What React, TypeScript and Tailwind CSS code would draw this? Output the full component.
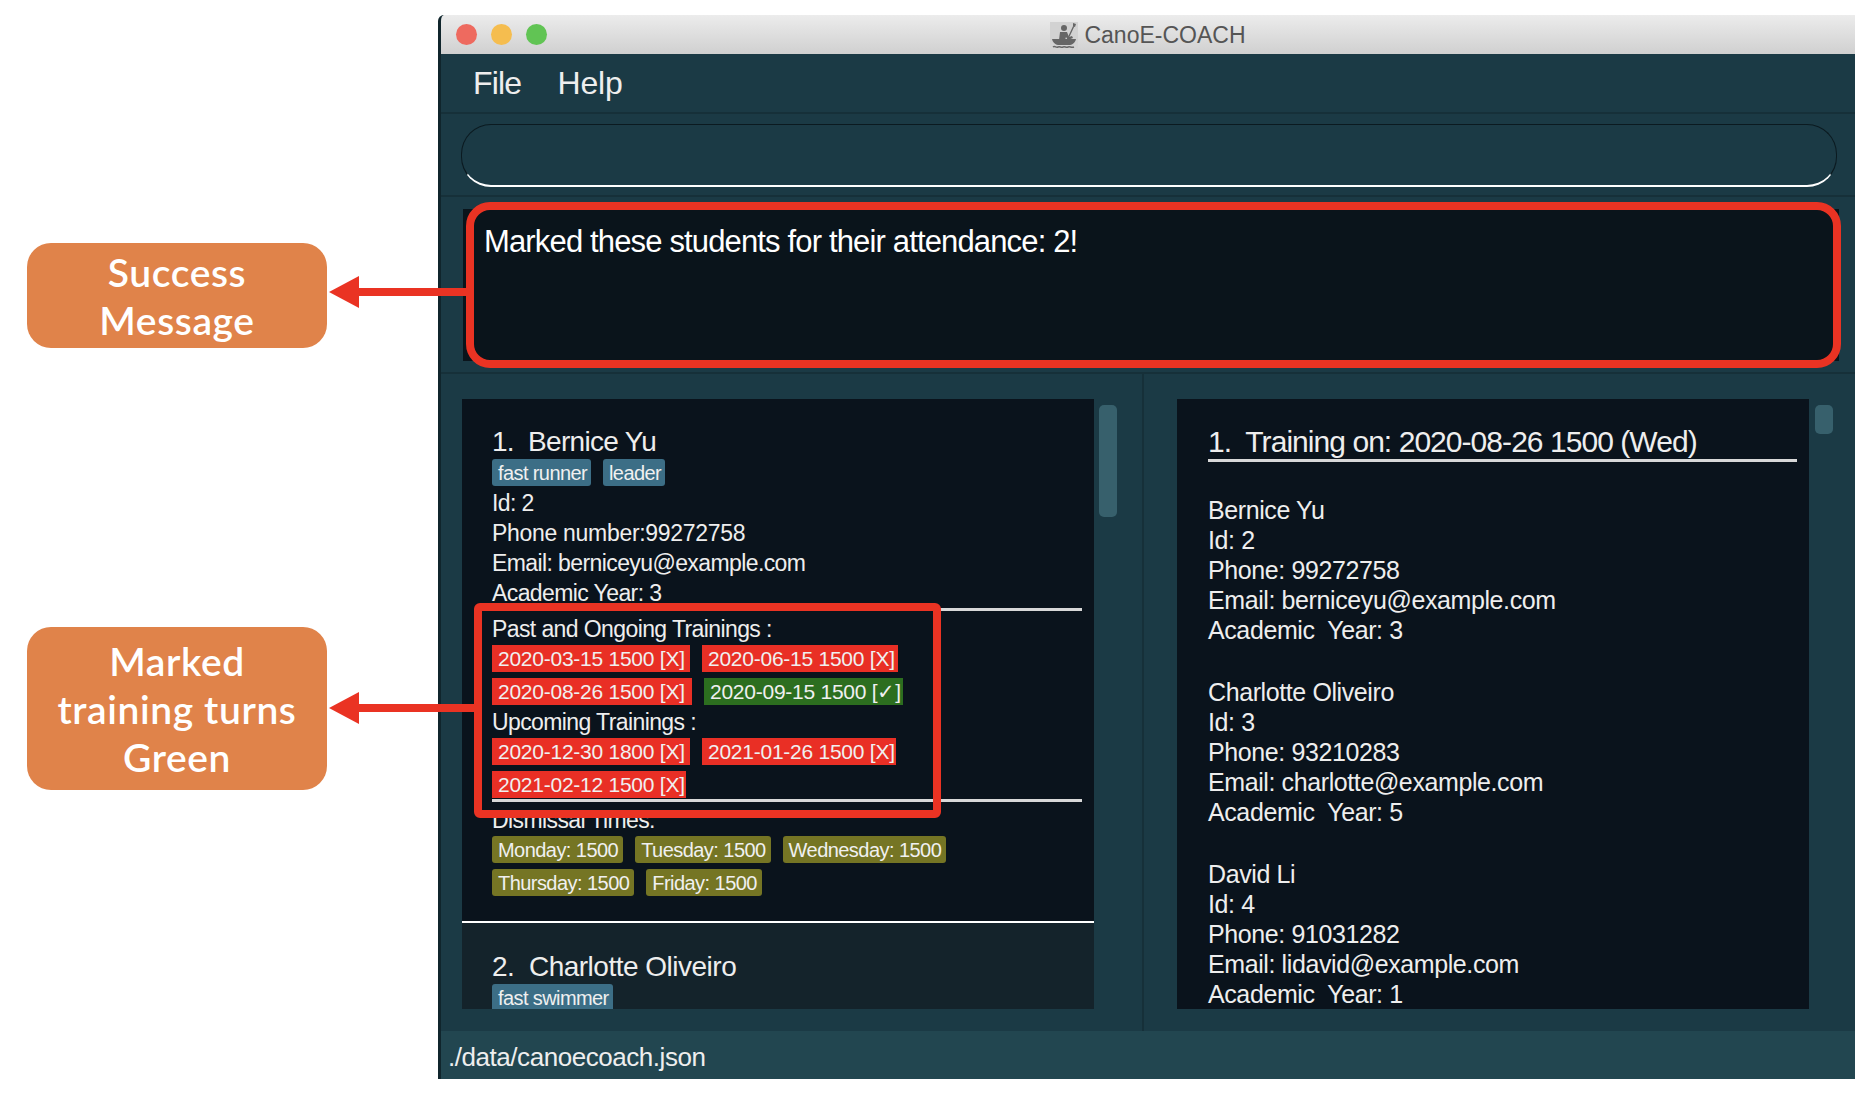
const sans = "font-['Liberation_Sans',Arial,sans-serif]";

function Tag({ label, color, width }: { label: string; color: string; width?: string }) {
  return (
    <span className={`inline-flex h-[27px] items-center whitespace-nowrap pl-[6px] leading-none text-[#f0f0f0] ${color} ${width ?? ''}`}>
      {label}
    </span>
  );
}

const teal = 'rounded-[3px] bg-[#3c6e86] pr-[4px] text-[20px] tracking-[-0.6px]';
const olive = 'rounded-[3px] bg-[#757524] pr-[5px] text-[20px] tracking-[-0.55px]';
const red = 'bg-[#e92f25] text-[21px] tracking-[-0.25px]';
const green = 'bg-[#2c6e1f] text-[21px] tracking-[-0.25px]';

const trainees = [
  { name: 'Bernice Yu', id: 2, phone: '99272758', email: 'berniceyu@example.com', year: 3 },
  { name: 'Charlotte Oliveiro', id: 3, phone: '93210283', email: 'charlotte@example.com', year: 5 },
  { name: 'David Li', id: 4, phone: '91031282', email: 'lidavid@example.com', year: 1 },
];

function Row({ children }: { children: React.ReactNode }) {
  return <div className="h-[30px] whitespace-pre text-[23px] leading-[30px] tracking-[-0.6px] text-[#eeeeee]">{children}</div>;
}

function DetailRow({ children }: { children: React.ReactNode }) {
  return <div className="h-[30px] whitespace-pre text-[25px] leading-[30px] tracking-[-0.4px] text-[#eeeeee]">{children}</div>;
}

function Heading({ children, size }: { children: React.ReactNode; size: string }) {
  return <div className={`h-[34px] whitespace-pre leading-[34px] text-[#eeeeee] ${size}`}>{children}</div>;
}

function CanoeIcon() {
  return (
    <svg width="28" height="28" viewBox="0 0 28 28" className="bg-[#d2d2d2]">
      <circle cx="14" cy="6" r="3" fill="#666" />
      <path d="M10 10h7l2 5 3-1 1 2-5 2-2-3-1 3h-6z" fill="#666" />
      <path d="M24 2l1 1-7 15-1-1zM23 1l3 1-1 3-2-1z" fill="#666" />
      <path d="M2 17h24c-1 4-4 6-7 6H9c-3 0-6-2-7-6z" fill="#666" />
      <path d="M3 25c2-1.500 3 1 5 0s3 1 5 0 3 1 5 0 3 1 6 0" stroke="#666" strokeWidth="1.500" fill="none" />
    </svg>
  );
}

function Callout({ lines, height, className }: { lines: string[]; height: string; className: string }) {
  return (
    <div className={`flex w-[300px] flex-col items-center justify-center rounded-[24px] bg-[#e0834a] font-['Lato',sans-serif] text-[39px] font-semibold leading-[48px] tracking-[0.6px] text-white ${height} ${className}`}>
      {lines.map(line => <div key={line}>{line}</div>)}
    </div>
  );
}

function Arrow({ className }: { className: string }) {
  return (
    <div className={`absolute flex items-center ${className}`}>
      <div className="h-0 w-0 border-y-[16px] border-r-[30px] border-y-transparent border-r-[#ea3323]" />
      <div className="h-[8px] flex-1 bg-[#ea3323]" />
    </div>
  );
}

export default function App() {
  return (
    <div className={`relative flex h-[1098px] w-[1876px] overflow-hidden bg-white pt-[15px] pb-[19px] ${sans}`}>
      {/* callouts */}
      <div className="w-[438px] shrink-0 pl-[27px]">
        <Callout lines={['Success', 'Message']} height="h-[105px]" className="mt-[228px]" />
        <Callout lines={['Marked', 'training turns', 'Green']} height="h-[163px]" className="mt-[279px]" />
      </div>

      {/* app window */}
      <div className="flex w-[1417px] flex-col overflow-hidden rounded-tl-[6px] border-l-[3px] border-[#10252c] bg-[#1b3a45]">
        <div className="relative flex h-[39px] shrink-0 items-center justify-center bg-gradient-to-b from-[#ececec] to-[#d0d0d0]">
          <div className="absolute left-[15px] flex gap-[14px]">
            <span className="h-[21px] w-[21px] rounded-full bg-[#ee6a5f]" />
            <span className="h-[21px] w-[21px] rounded-full bg-[#f5bd4f]" />
            <span className="h-[21px] w-[21px] rounded-full bg-[#61c454]" />
          </div>
          <div className="flex items-center gap-[6px] pt-[2px] text-[23px] text-[#555555]">
            <CanoeIcon />
            <span>CanoE-COACH</span>
          </div>
        </div>

        <div className="flex h-[60px] shrink-0 items-center gap-[36px] border-b-[2px] border-[#163039] pl-[32px] text-[32px] text-[#eeeeee]">
          <span className="tracking-[-0.8px]">File</span>
          <span className="tracking-[-0.1px]">Help</span>
        </div>

        <div className="h-[83px] shrink-0 border-b-[2px] border-[#163039] pt-[10px] pr-[18px] pl-[20px]">
          <div className="h-[63px] rounded-[30px] border border-[#0b1a20] border-b-2 border-b-white" />
        </div>

        <div className="h-[177px] shrink-0 border-b-[2px] border-[#163039] pt-[12px] pr-[16px] pl-[22px]">
          <div className="h-[152px] bg-[#0a141b] pt-[15px] pl-[21px] text-[31px] leading-[36px] tracking-[-0.85px] text-white">
            Marked these students for their attendance: 2!
          </div>
        </div>

        <div className="flex min-h-0 flex-1">
          <div className="flex w-[703px] shrink-0 border-r-[2px] border-[#163039] pt-[25px] pl-[21px]">
            <div className="h-[610px] w-[632px] shrink-0 overflow-hidden bg-[#0a131c]">
              <div className="h-[522px] px-[30px] pt-[26px] pr-[12px]">
                <Heading size="text-[28px] tracking-[-0.7px]">1.  Bernice Yu</Heading>
                <div className="flex gap-[12px] pb-[2px]">
                  <Tag label="fast runner" color={teal} />
                  <Tag label="leader" color={teal} />
                </div>
                <Row>Id: 2</Row>
                <Row><span className="tracking-[-0.3px]">Phone number:99272758</span></Row>
                <Row>Email: berniceyu@example.com</Row>
                <Row>Academic Year: 3</Row>
                <div className="mb-[3px] h-[3px] bg-[#d8d8d8]" />
                <Row>Past and Ongoing Trainings :</Row>
                <div className="mt-[1px] mb-[2px] flex flex-wrap gap-x-[12px] gap-y-[6px]">
                  <Tag label="2020-03-15 1500 [X]" color={red} width="w-[198px]" />
                  <Tag label="2020-06-15 1500 [X]" color={red} width="w-[196px]" />
                  <Tag label="2020-08-26 1500 [X]" color={red} width="w-[200px]" />
                  <Tag label="2020-09-15 1500 [✓]" color={green} width="w-[199px]" />
                </div>
                <Row>Upcoming Trainings :</Row>
                <div className="mt-[1px] flex flex-wrap gap-x-[12px] gap-y-[6px]">
                  <Tag label="2020-12-30 1800 [X]" color={red} width="w-[198px]" />
                  <Tag label="2021-01-26 1500 [X]" color={red} width="w-[194px]" />
                  <Tag label="2021-02-12 1500 [X]" color={red} width="w-[194px]" />
                </div>
                <div className="mt-[1px] mb-[3px] h-[3px] bg-[#d8d8d8]" />
                <Row>Dismissal Times:</Row>
                <div className="mt-[1px] flex flex-wrap gap-x-[12px] gap-y-[6px]">
                  <Tag label="Monday: 1500" color={olive} />
                  <Tag label="Tuesday: 1500" color={olive} />
                  <Tag label="Wednesday: 1500" color={olive} />
                  <Tag label="Thursday: 1500" color={olive} />
                  <Tag label="Friday: 1500" color={olive} />
                </div>
              </div>
              <div className="h-[2px] bg-white" />
              <div className="h-[90px] bg-[#14232b] pt-[27px] pl-[30px]">
                <Heading size="text-[28px] tracking-[-0.5px]">2.  Charlotte Oliveiro</Heading>
                <Tag label="fast swimmer" color={teal} />
              </div>
            </div>
            <div className="mt-[6px] ml-[5px] h-[112px] w-[18px] rounded-[5px] bg-[#37606c]" />
          </div>

          <div className="flex flex-1 pt-[25px] pl-[33px]">
            <div className="h-[610px] w-[632px] shrink-0 overflow-hidden bg-[#0a131c] pt-[26px] pr-[12px] pl-[31px]">
              <Heading size="text-[30px] tracking-[-0.95px]">1.  Training on: 2020-08-26 1500 (Wed)</Heading>
              <div className="mb-[33px] h-[3px] bg-[#d8d8d8]" />
              {trainees.map(t => (
                <div key={t.id} className="mb-[32px]">
                  <DetailRow>{t.name}</DetailRow>
                  <DetailRow>Id: {t.id}</DetailRow>
                  <DetailRow>Phone: {t.phone}</DetailRow>
                  <DetailRow>Email: {t.email}</DetailRow>
                  <DetailRow>Academic  Year: {t.year}</DetailRow>
                </div>
              ))}
            </div>
            <div className="mt-[6px] ml-[6px] h-[29px] w-[18px] rounded-[5px] bg-[#37606c]" />
          </div>
        </div>

        <div className="flex h-[48px] shrink-0 items-center bg-[#224650] pt-[5px] pl-[7px] text-[26px] tracking-[-0.45px] text-[#eeeeee]">
          ./data/canoecoach.json
        </div>
      </div>

      {/* red annotations over the window */}
      <div className="absolute top-[202px] left-[466px] h-[166px] w-[1375px] rounded-[24px] border-[8px] border-[#ea3323]" />
      <div className="absolute top-[603px] left-[474px] h-[215px] w-[467px] rounded-[6px] border-[8px] border-[#ea3323]" />
      <Arrow className="top-[276px] left-[329px] w-[138px]" />
      <Arrow className="top-[692px] left-[329px] w-[146px]" />
    </div>
  );
}
